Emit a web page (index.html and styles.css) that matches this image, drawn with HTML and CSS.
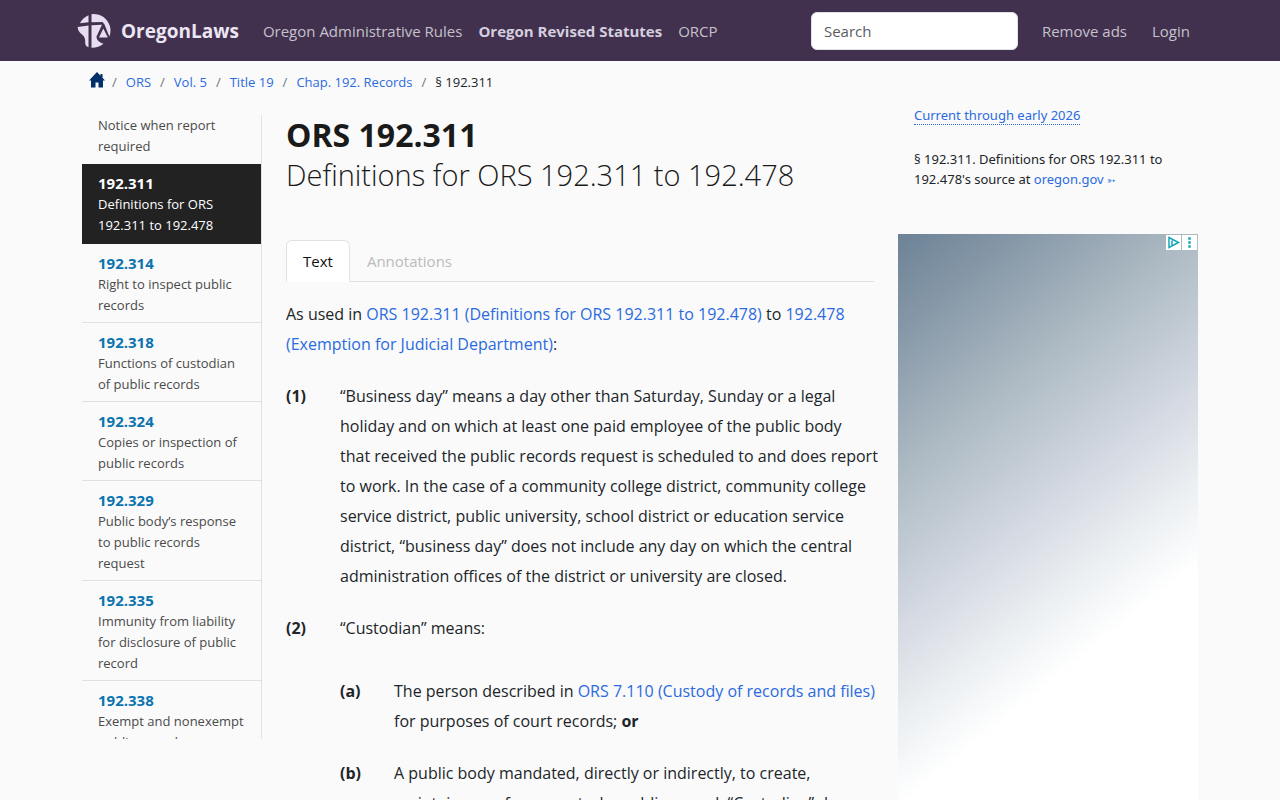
FILE: index.html
```html
<!DOCTYPE html>
<html lang="en">
  <head>
    <meta charset="UTF-8">
    <meta name="viewport" content="width=device-width, initial-scale=1">
    <title>ORS 192.311 – Definitions for ORS 192.311 to 192.478</title>
    <link rel="stylesheet" href="styles.css">
  </head>
  <body>
    <header class="navbar">
      <div class="container navbar-inner">
        <a class="brand" href="#">
          <svg class="brand-logo" viewBox="0 0 34 34" aria-hidden="true">
            <path d="M11.500 1.200V8.200L3 9.200A16.500 16.500 0 0 1 11.500 1.200Z"/>
            <path d="M14.500 .2C23 -.6 30 4 32.700 11.500Q34.500 17 32.300 22.500L27.500 10.500L25.500 8L14.500 8.200Z"/>
            <path d="M.6 13L11.500 11.500V33.200C9 32.300 8.200 31 8.200 28.500C8.500 25 7.500 22.500 5 20.500C2.500 18.500 .8 16 .6 13Z"/>
            <path d="M14.500 11.200L25 10.800L19.500 22.500C19.500 26.500 23 28.500 26.500 29.800C23 33 18.500 34 14.500 33.800Z"/>
            <path d="M26.300 14.500L30.800 23.500H22Z"/>
          </svg>
          OregonLaws
        </a>
        <nav class="nav-links">
          <a href="#">Oregon Administrative Rules</a>
          <a class="active" href="#">Oregon Revised Statutes</a>
          <a href="#">ORCP</a>
        </nav>
        <form class="nav-search">
          <input type="search" placeholder="Search" aria-label="Search">
        </form>
        <nav class="nav-user">
          <a href="#">Remove ads</a>
          <a href="#">Login</a>
        </nav>
      </div>
    </header>

    <nav class="container" aria-label="Breadcrumb">
      <ol class="breadcrumb">
        <li>
          <a href="#" aria-label="Home">
            <svg class="home-icon" viewBox="0 0 16 16" aria-hidden="true">
              <path d="M8 0L0 8.500H2V15.500H6.500V10.500H9.500V15.500H14V8.500H16L13.500 5.800V2H11.500V3.700Z"/>
            </svg>
          </a>
        </li>
        <li><a href="#">ORS</a></li>
        <li><a href="#">Vol. 5</a></li>
        <li><a href="#">Title 19</a></li>
        <li><a href="#">Chap. 192. Records</a></li>
        <li>§ 192.311</li>
      </ol>
    </nav>

    <div class="container layout">
      <nav class="sections" aria-label="Sections">
        <a href="#">Notice when report required</a>
        <a class="current" href="#"><b>192.311</b> Definitions for ORS 192.311 to 192.478</a>
        <a href="#"><b>192.314</b> Right to inspect public records</a>
        <a href="#"><b>192.318</b> Functions of custodian of public records</a>
        <a href="#"><b>192.324</b> Copies or inspection of public records</a>
        <a href="#"><b>192.329</b> Public body’s response to public records request</a>
        <a href="#"><b>192.335</b> Immunity from liability for disclosure of public record</a>
        <a href="#"><b>192.338</b> Exempt and nonexempt public record; nonexempt</a>
      </nav>

      <main class="statute">
        <h1>ORS 192.311 <span>Definitions for ORS 192.311 to 192.478</span></h1>
        <div class="tabs" role="tablist">
          <button class="tab selected" type="button" role="tab" aria-selected="true">Text</button>
          <button class="tab" type="button" role="tab" aria-selected="false">Annotations</button>
        </div>
        <div class="statute-text">
          <p>As used in <a href="#">ORS 192.311 (Definitions for ORS 192.311 to 192.478)</a> to <a href="#">192.478 (Exemption for Judicial Department)</a>:</p>
          <section class="clause">
            <b>(1)</b>
            <p>“Business day” means a day other than Saturday, Sunday or a legal holiday and on which at least one paid employee of the public body that&nbsp;received the public records request is scheduled to and does report to work. In the case of a community college district, community college service district, public university, school district or education service district, “business day” does not include any day on which the central administration offices of the district or university are closed.</p>
          </section>
          <section class="clause">
            <b>(2)</b>
            <div>
              <p>“Custodian” means:</p>
              <div class="subclauses">
                <section class="clause">
                  <b>(a)</b>
                  <p>The person described in <a href="#">ORS 7.110 (Custody of records and files)</a> for purposes of court records; <strong>or</strong></p>
                </section>
                <section class="clause">
                  <b>(b)</b>
                  <p>A public body mandated, directly or indirectly, to create, maintain, care for or control a public record. “Custodian” does</p>
                </section>
              </div>
            </div>
          </section>
        </div>
      </main>

      <aside class="extras">
        <div class="source">
          <p><a class="dotted" href="#">Current through early 2026</a></p>
          <p>§ 192.311. Definitions for ORS 192.311 to 192.478's source at <a href="#">oregon.gov <small>➳</small></a></p>
        </div>
        <div class="ad">
          <div class="ad-buttons">
            <button type="button" aria-label="About this ad">
              <svg viewBox="0 0 15 15" aria-hidden="true"><path d="M3 2.500V12.500L12.500 7.500ZM6 5.500V10"/></svg>
            </button>
            <button type="button" aria-label="Ad options">
              <svg viewBox="0 0 15 15" aria-hidden="true"><path d="M7 3h1v1h-1zM7 7h1v1h-1zM7 11h1v1h-1z"/></svg>
            </button>
          </div>
        </div>
      </aside>
    </div>
  </body>
</html>
```

FILE: styles.css
```css
* {
  box-sizing: border-box;
}

body {
  margin: 0;
  height: 100vh;
  overflow: hidden;
  background: #fafafa;
  color: #212529;
  font-family: "Open Sans", "Noto Sans", sans-serif;
  font-size: 15px;
  line-height: 24px;
}

a {
  color: #2a6be0;
  text-decoration: none;
}

p {
  margin: 0;
}

button,
input {
  font: inherit;
}

.container {
  max-width: 1140px;
  margin: 0 auto;
  padding: 0 12px;
}

/* top bar */
.navbar {
  background: #41314f;
}

.navbar-inner {
  display: flex;
  align-items: center;
  min-height: 61px;
  padding: 0 8px 0 7px;
}

.navbar a {
  color: #c6c1cb;
}

.navbar .brand {
  display: flex;
  align-items: center;
  gap: 10px;
  margin-right: 24px;
  color: #ece6f2;
  font-size: 19px;
  font-weight: 700;
}

.brand-logo {
  width: 34px;
  height: 34px;
  fill: #e6ddf0;
}

.nav-links {
  display: flex;
  gap: 16px;
}

.navbar .active {
  color: #d5cede;
  font-weight: 700;
}

.nav-search {
  margin-left: auto;
}

.nav-search input {
  width: 207px;
  height: 38px;
  padding: 0 12px;
  border: 1px solid #dee2e6;
  border-radius: 6px;
  background: #fff;
}

.nav-search input::placeholder {
  color: #595c5f;
}

.nav-user {
  display: flex;
  gap: 25px;
  padding: 0 12px 0 24px;
}

/* breadcrumb */
.breadcrumb {
  display: flex;
  margin: 0;
  padding: 9px 7px 10px;
  list-style: none;
  font-size: 13px;
}

.breadcrumb li + li::before {
  content: "/";
  padding: 0 9px 0 9px;
  color: #6c757d;
}

.home-icon {
  display: block;
  width: 16px;
  height: 16px;
  margin-top: 2px;
  fill: #03306b;
}

.breadcrumb li:first-child {
  margin-right: -2px;
}

/* columns */
.layout {
  display: grid;
  grid-template-columns: 180px 1fr 300px;
  gap: 24px;
  align-items: start;
}

.sections {
  height: calc(100vh - 176px);
  margin-top: 11px;
  overflow: hidden;
  border-right: 1px solid #dee2e6;
  font-size: 13px;
  line-height: 21px;
}

.sections a {
  display: block;
  padding: 8px 16px 6px;
  border-bottom: 1px solid #dee2e6;
  color: #4a4a4a;
}

.sections a:first-child {
  padding: 0 16px 7px;
  border-bottom: 0;
}

.sections b {
  display: block;
  color: #0b74b0;
  font-size: 15px;
  line-height: 22px;
}

.sections .current {
  padding-bottom: 7px;
  border-color: #222;
}

.sections .current,
.sections .current b {
  background: #222;
  color: #fff;
}

/* statute text */
h1 {
  margin: 11px 0 45px;
  color: #1a1a1a;
  font-size: 32px;
  line-height: 40px;
}

h1 span {
  display: block;
  font-size: 29px;
  font-weight: 300;
}

.tabs {
  display: flex;
  margin-bottom: 17px;
  border-bottom: 1px solid #dee2e6;
}

.tab {
  margin-bottom: -1px;
  padding: 8px 16px;
  border: 1px solid transparent;
  border-radius: 6px 6px 0 0;
  background: none;
  color: #bbb;
}

.tab.selected {
  border-color: #dee2e6 #dee2e6 #fff;
  background: #fff;
  color: #111;
}

/* runs a little into the column gap */
.statute-text {
  margin-right: -8px;
  font-size: 16px;
  line-height: 30px;
}

.clause {
  display: grid;
  grid-template-columns: 54px 1fr;
  margin-top: 22px;
}

.subclauses {
  padding-top: 11px;
}

/* right column */
.source {
  padding: 1px 16px 0;
  font-family: "Noto Sans", sans-serif;
  font-size: 13px;
  line-height: 20px;
}

.source p + p {
  margin-top: 24px;
}

.dotted {
  border-bottom: 1px dotted;
}

.source small {
  font-size: 10px;
}

.ad {
  height: 600px;
  margin-top: 44px;
  background: linear-gradient(141deg, #6c8296, #8b9cab 14%, #aebbc4 29%, #d5dae3 47%, #ebeff2 58%, #fff 68%);
}

.ad-buttons {
  display: flex;
  justify-content: flex-end;
  gap: 1px;
  padding: 1px 1px 0 0;
}

.ad-buttons button {
  width: 15px;
  height: 15px;
  padding: 0;
  border: 0;
  background: #fff;
}

.ad-buttons svg {
  display: block;
  width: 15px;
  height: 15px;
  fill: none;
  stroke: #14a5b5;
  stroke-width: 1.500;
}
```
